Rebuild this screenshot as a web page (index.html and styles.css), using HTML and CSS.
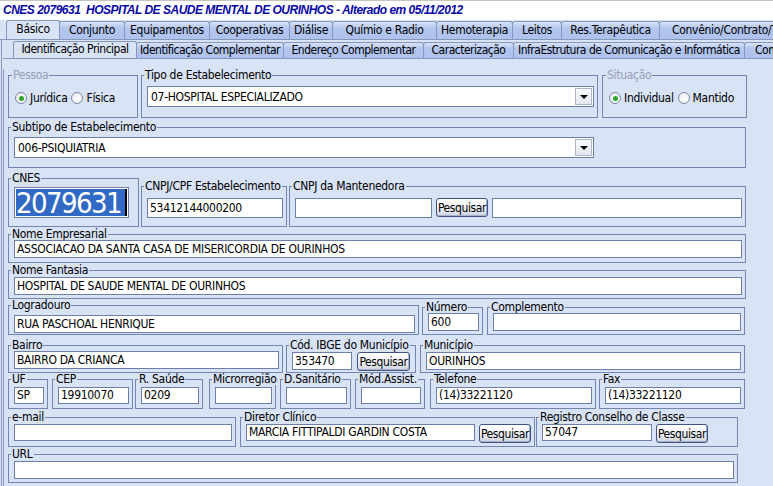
FILE: index.html
```html
<!DOCTYPE html>
<html lang="pt-BR">
<head>
    <meta charset="UTF-8" />
    <title>CNES - Estabelecimento</title>
    <link rel="stylesheet" href="styles.css">
</head>
<body>
    <div class="title">CNES 2079631  HOSPITAL DE SAUDE MENTAL DE OURINHOS - Alterado em 05/11/2012</div>

    <div class="tabs tabs-top">
        <span class="tab active t-basico">Básico</span>
        <span class="tab t-conjunto">Conjunto</span>
        <span class="tab t-equip">Equipamentos</span>
        <span class="tab t-coop">Cooperativas</span>
        <span class="tab t-dialise">Diálise</span>
        <span class="tab t-quimio">Químio e Radio</span>
        <span class="tab t-hemo">Hemoterapia</span>
        <span class="tab t-leitos">Leitos</span>
        <span class="tab t-res">Res.Terapêutica</span>
        <span class="tab t-conv">Convênio/Contrato/T</span>
    </div>

    <div class="outer">
        <div class="tabs tabs-sub">
            <span class="tab active s-ident">Identificação Principal</span>
            <span class="tab s-identc">Identificação Complementar</span>
            <span class="tab s-end">Endereço Complementar</span>
            <span class="tab s-carac">Caracterização</span>
            <span class="tab s-infra">InfraEstrutura de Comunicação e Informática</span>
            <span class="tab s-com">Com</span>
        </div>

        <div class="inner">
            <div class="row r-a">
                <fieldset class="grp g-pessoa">
                    <legend class="off">Pessoa</legend>
                    <label class="opt"><span class="radio on"></span>Jurídica</label>
                    <label class="opt"><span class="radio"></span>Física</label>
                </fieldset>
                <fieldset class="grp g-tipo">
                    <legend>Tipo de Estabelecimento</legend>
                    <div class="combo">
                        <span class="combo-text">07-HOSPITAL ESPECIALIZADO</span>
                        <span class="drop"></span>
                    </div>
                </fieldset>
                <fieldset class="grp g-situacao">
                    <legend class="off">Situação</legend>
                    <label class="opt"><span class="radio on"></span>Individual</label>
                    <label class="opt"><span class="radio"></span>Mantido</label>
                </fieldset>
            </div>

            <div class="row r-b">
                <fieldset class="grp g-full">
                    <legend>Subtipo de Estabelecimento</legend>
                    <div class="combo c-subtipo">
                        <span class="combo-text">006-PSIQUIATRIA</span>
                        <span class="drop"></span>
                    </div>
                </fieldset>
            </div>

            <div class="row r-c">
                <fieldset class="grp g-cnes">
                    <legend>CNES</legend>
                    <div class="cnes-box"><span class="cnes-sel">2079631</span></div>
                </fieldset>
                <fieldset class="grp g-cnpj">
                    <legend>CNPJ/CPF Estabelecimento</legend>
                    <div class="fld">53412144000200</div>
                </fieldset>
                <fieldset class="grp g-mant">
                    <legend>CNPJ da Mantenedora</legend>
                    <div class="fld f-mant"></div>
                    <button class="btn">Pesquisar</button>
                    <div class="fld"></div>
                </fieldset>
            </div>

            <div class="row r-d">
                <fieldset class="grp g-full">
                    <legend>Nome Empresarial</legend>
                    <div class="fld">ASSOCIACAO DA SANTA CASA DE MISERICORDIA DE OURINHOS</div>
                </fieldset>
            </div>

            <div class="row r-e">
                <fieldset class="grp g-full">
                    <legend>Nome Fantasia</legend>
                    <div class="fld">HOSPITAL DE SAUDE MENTAL DE OURINHOS</div>
                </fieldset>
            </div>

            <div class="row r-f">
                <fieldset class="grp g-lograd">
                    <legend>Logradouro</legend>
                    <div class="fld">RUA PASCHOAL HENRIQUE</div>
                </fieldset>
                <fieldset class="grp g-numero">
                    <legend>Número</legend>
                    <div class="fld">600</div>
                </fieldset>
                <fieldset class="grp g-compl">
                    <legend>Complemento</legend>
                    <div class="fld"></div>
                </fieldset>
            </div>

            <div class="row r-g">
                <fieldset class="grp g-bairro">
                    <legend>Bairro</legend>
                    <div class="fld">BAIRRO DA CRIANCA</div>
                </fieldset>
                <fieldset class="grp g-ibge">
                    <legend>Cód. IBGE do Município</legend>
                    <div class="fld f-ibge">353470</div>
                    <button class="btn">Pesquisar</button>
                </fieldset>
                <fieldset class="grp g-munic">
                    <legend>Município</legend>
                    <div class="fld">OURINHOS</div>
                </fieldset>
            </div>

            <div class="row r-h">
                <fieldset class="grp g-uf">
                    <legend>UF</legend>
                    <div class="fld">SP</div>
                </fieldset>
                <fieldset class="grp g-cep">
                    <legend>CEP</legend>
                    <div class="fld">19910070</div>
                </fieldset>
                <fieldset class="grp g-rsaude">
                    <legend>R. Saúde</legend>
                    <div class="fld">0209</div>
                </fieldset>
                <fieldset class="grp g-micro">
                    <legend>Microrregião</legend>
                    <div class="fld"></div>
                </fieldset>
                <fieldset class="grp g-dsan">
                    <legend>D.Sanitário</legend>
                    <div class="fld"></div>
                </fieldset>
                <fieldset class="grp g-mod">
                    <legend>Mód.Assist.</legend>
                    <div class="fld"></div>
                </fieldset>
                <fieldset class="grp g-tel">
                    <legend>Telefone</legend>
                    <div class="fld">(14)33221120</div>
                </fieldset>
                <fieldset class="grp g-fax">
                    <legend>Fax</legend>
                    <div class="fld">(14)33221120</div>
                </fieldset>
            </div>

            <div class="row r-i">
                <fieldset class="grp g-email">
                    <legend>e-mail</legend>
                    <div class="fld"></div>
                </fieldset>
                <fieldset class="grp g-diretor">
                    <legend>Diretor Clínico</legend>
                    <div class="fld">MARCIA FITTIPALDI GARDIN COSTA</div>
                    <button class="btn">Pesquisar</button>
                </fieldset>
                <fieldset class="grp g-registro">
                    <legend>Registro Conselho de Classe</legend>
                    <div class="fld f-reg">57047</div>
                    <button class="btn">Pesquisar</button>
                </fieldset>
            </div>

            <div class="row r-j">
                <fieldset class="grp g-url">
                    <legend>URL</legend>
                    <div class="fld"></div>
                </fieldset>
            </div>
        </div>
    </div>
</body>
</html>
```

FILE: styles.css
```css
body {
    margin: 0;
    width: 773px;
    height: 486px;
    overflow: hidden;
    background: #d9e3f6;
    font-family: "DejaVu Sans Condensed", "Liberation Sans Narrow", "Arial Narrow", sans-serif;
    font-size: 12px;
    letter-spacing: -0.3px;
    color: #000;
}

/* title bar */
.title {
    height: 19px;
    line-height: 19px;
    padding-left: 3px;
    background: #fff;
    border-top: 1px solid #c4c4c4;
    color: #0808a4;
    font-family: "Liberation Sans", Arial, sans-serif;
    font-size: 12px;
    font-weight: bold;
    font-style: italic;
    letter-spacing: -0.5px;
    white-space: pre;
}

/* tabs */
.tabs {
    display: flex;
    align-items: flex-end;
    box-sizing: border-box;
    height: 20px;
    border-bottom: 1px solid #8797bb;
    white-space: nowrap;
    overflow: hidden;
}
.tabs-top {
    padding-left: 6px;
}
.tabs-sub {
    height: 19px;
    padding-left: 10px;
    letter-spacing: -0.5px;
}
.tab {
    flex: none;
    box-sizing: border-box;
    height: 18px;
    line-height: 17px;
    padding: 0 1px;
    margin-right: -1px;
    border: 1px solid #8797bb;
    border-bottom: none;
    border-radius: 3px 3px 0 0;
    background: linear-gradient(#dbe4f8, #b3c6ee 35%, #aec2ee);
    text-align: center;
    overflow: hidden;
}
.tabs-sub .tab {
    height: 16px;
    line-height: 15px;
}
.tab.active {
    height: 20px;
    margin-bottom: -1px;
    background: #d9e3f6;
    position: relative;
    z-index: 1;
}
.tabs-sub .tab.active {
    height: 18px;
}
.t-basico { width: 54px; }
.t-conjunto { width: 66px; }
.t-equip { width: 86px; }
.t-coop { width: 81px; }
.t-dialise { width: 44px; }
.t-quimio { width: 105px; }
.t-hemo { width: 77px; }
.t-leitos { width: 50px; }
.t-res { width: 99px; }
.t-conv { padding: 0 12px; }
.s-ident { width: 124px; }
.s-identc { width: 148px; }
.s-end { width: 141px; }
.s-carac { width: 91px; }
.s-infra { width: 232px; }
.s-com { padding: 0 10px; }

.outer {
    margin-left: 1px;
    padding-left: 1px;
    border-left: 1px solid #8797bb;
}
.inner {
    height: 430px;
    padding-left: 2px;
    border-left: 1px solid #8797bb;
}

/* group boxes */
.row {
    display: flex;
    align-items: flex-end;
}
.grp {
    box-sizing: border-box;
    display: flex;
    align-items: flex-start;
    min-width: 0;
    margin: 0;
    padding: 0 3px 0 5px;
    border: 1px solid #7386b3;
}
.grp legend {
    padding: 0 1px;
    margin-left: -3px;
    line-height: 12px;
    white-space: nowrap;
}
.grp legend.off {
    color: #97a0b6;
}

.fld {
    flex: 1;
    min-width: 0;
    box-sizing: border-box;
    height: 18px;
    line-height: 16px;
    padding: 0 2px;
    background: #fff;
    border: 1px solid #6d7fa8;
    white-space: nowrap;
    overflow: hidden;
}

.combo {
    flex: 1;
    display: flex;
    align-items: center;
    box-sizing: border-box;
    height: 21px;
    padding: 1px;
    background: #fff;
    border: 1px solid #6d7fa8;
}
.combo-text {
    flex: 1;
    padding-left: 2px;
}
.c-subtipo {
    flex: none;
    width: 580px;
}
.drop {
    flex: none;
    box-sizing: border-box;
    width: 17px;
    height: 17px;
    display: flex;
    align-items: center;
    justify-content: center;
    background: linear-gradient(#fafbfd, #e3e7ef);
    border: 1px solid #aeb7c9;
}
.drop::after {
    content: "";
    border-left: 4px solid transparent;
    border-right: 4px solid transparent;
    border-top: 4px solid #000;
}

.btn {
    flex: none;
    box-sizing: border-box;
    width: 52px;
    height: 19px;
    margin-left: 4px;
    padding: 0;
    font: inherit;
    letter-spacing: -0.4px;
    line-height: 16px;
    color: #000;
    background: linear-gradient(#ffffff, #eceef4 55%, #cdd3e0);
    border: 1px solid #3f5384;
    border-radius: 3px;
    box-shadow: inset -1px -1px 0 #a9b3cb;
}

/* radio buttons */
.opt {
    display: flex;
    align-items: center;
    gap: 3px;
    margin-right: 4px;
}
.radio {
    box-sizing: border-box;
    width: 12px;
    height: 12px;
    display: flex;
    align-items: center;
    justify-content: center;
    border: 1px solid #7d8aa6;
    border-radius: 50%;
    background: radial-gradient(circle at 60% 60%, #ffffff, #e4e6ea);
}
.radio.on::after {
    content: "";
    width: 5px;
    height: 5px;
    border-radius: 50%;
    background: #2fa52f;
}

/* CNES highlighted code */
.cnes-box {
    box-sizing: border-box;
    width: 115px;
    height: 31px;
    padding: 1px;
    background: #fff;
    border: 1px solid #6d7fa8;
}
.cnes-sel {
    display: block;
    height: 100%;
    font-size: 29px;
    letter-spacing: -1.6px;
    line-height: 29px;
    color: #fff;
    background: #316ac5;
    border-right: 2px solid #000;
    overflow: hidden;
}

/* rows: vertical placement */
.r-a { margin-top: 10px; }
.r-a .grp { height: 49px; padding-top: 5px; }
.r-a .g-pessoa, .r-a .g-situacao { padding-top: 10px; padding-left: 6px; }
.r-b { margin-top: 3px; }
.r-b .grp { height: 47px; padding-top: 4px; }
.r-c { margin-top: 4px; }
.r-c .grp { height: 47px; padding-top: 6px; }
.r-c .g-cnes { height: 55px; padding-top: 3px; }
.r-c .fld { height: 20px; line-height: 18px; }
.r-d { margin-top: 1px; }
.r-d .grp { height: 35px; }
.r-e { margin-top: 1px; }
.r-e .grp { height: 35px; padding-top: 1px; }
.r-f .grp { height: 34px; }
.r-f .g-lograd { height: 36px; padding-top: 4px; }
.r-g { margin-top: 4px; }
.r-g .grp { height: 34px; }
.r-g .g-ibge, .r-g .g-munic { padding-top: 1px; }
.r-h .grp { height: 36px; padding-top: 2px; }
.r-h .fld { height: 17px; line-height: 15px; }
.r-i { margin-top: 2px; }
.r-i .grp { height: 36px; padding-top: 1px; }
.r-i .fld { height: 17px; line-height: 15px; }
.r-j { margin-top: 1px; }
.r-j .grp { height: 35px; padding-top: 1px; }

/* group widths and gaps */
.g-pessoa { width: 130px; margin-left: 2px; }
.g-tipo { width: 457px; margin-left: 3px; }
.g-situacao { width: 145px; margin-left: 4px; }
.g-full { width: 738px; margin-left: 2px; }
.g-cnes { width: 131px; margin-left: 2px; }
.g-cnpj { width: 146px; margin-left: 2px; }
.g-mant { width: 457px; margin-left: 2px; }
.f-mant { flex: none; width: 137px; }
.g-mant .fld + .btn + .fld { margin-left: 4px; }
.g-lograd { width: 411px; margin-left: 2px; }
.g-numero { width: 61px; margin-left: 3px; }
.g-compl { width: 258px; margin-left: 4px; }
.g-bairro { width: 275px; margin-left: 2px; }
.g-ibge { width: 130px; margin-left: 3px; }
.f-ibge { flex: none; width: 60px; }
.g-ibge .btn { width: 53px; margin-left: 5px; }
.g-munic { width: 325px; margin-left: 4px; }
.g-uf { width: 40px; margin-left: 2px; }
.g-cep { width: 81px; margin-left: 4px; }
.g-rsaude { width: 68px; margin-left: 2px; }
.g-micro { width: 67px; margin-left: 6px; }
.g-dsan { width: 71px; margin-left: 4px; }
.g-mod { width: 70px; margin-left: 4px; }
.g-tel { width: 166px; margin-left: 5px; }
.g-fax { width: 146px; margin-left: 3px; }
.g-email { width: 228px; margin-left: 2px; }
.g-diretor { width: 295px; margin-left: 4px; }
.g-registro { width: 202px; margin-left: 1px; }
.f-reg { flex: none; width: 110px; }
.g-url { width: 730px; margin-left: 2px; }
```
